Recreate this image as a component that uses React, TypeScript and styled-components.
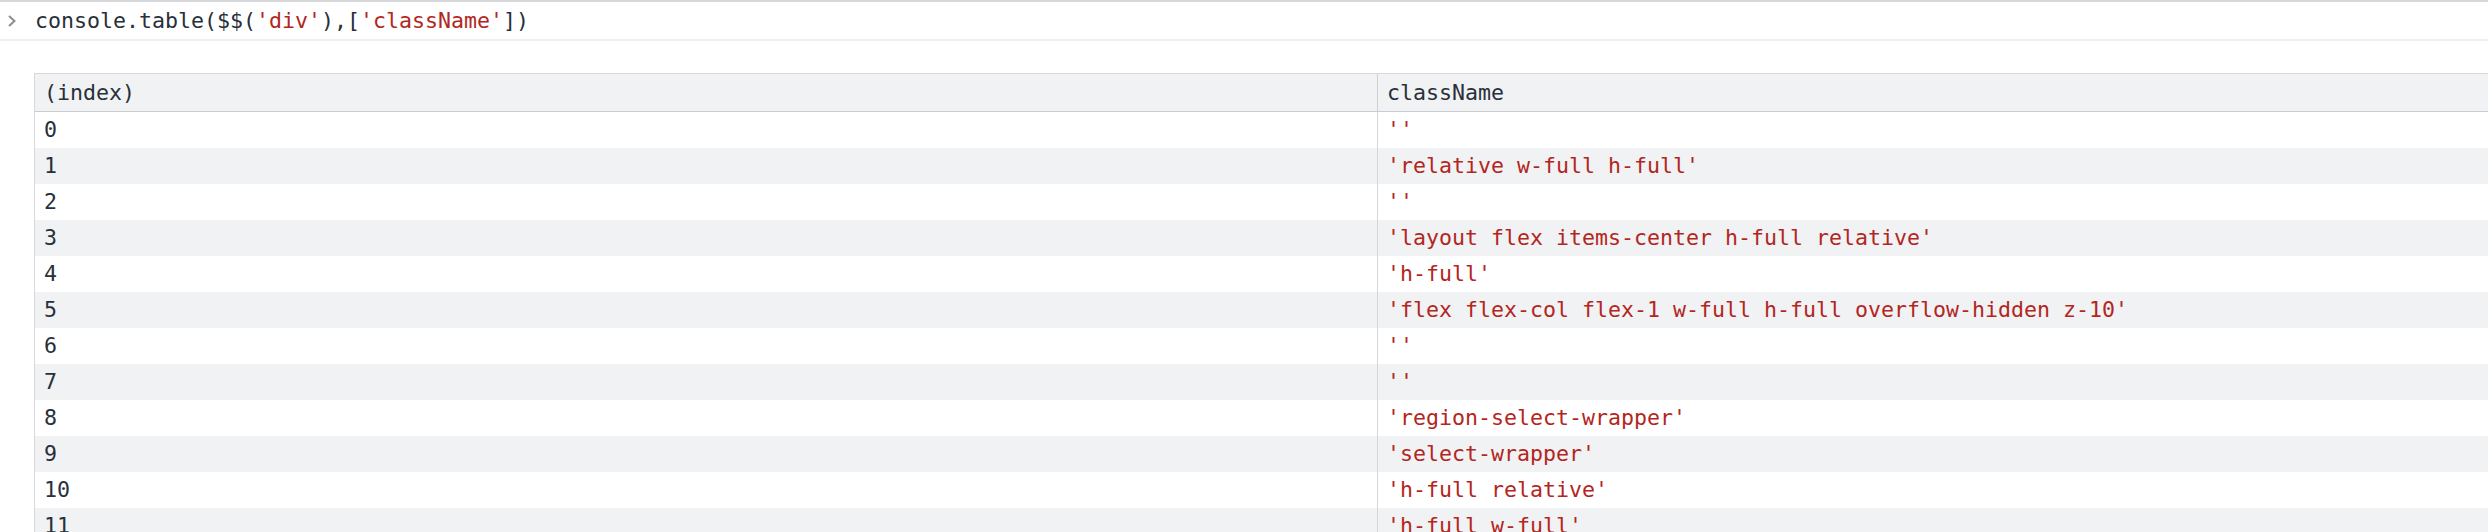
import React from "react";
import styled, { createGlobalStyle } from "styled-components";

const GlobalStyle = createGlobalStyle`
  html, body {
    margin: 0;
    padding: 0;
    background: #ffffff;
    overflow: hidden;
  }
`;

const Console = styled.div`
  width: 2488px;
  height: 532px;
  overflow: hidden;
  border-top: 2px solid #d5d7db;
  font-family: "DejaVu Sans Mono", "Liberation Mono", monospace;
  font-size: 21.6px;
  color: #28303a;
`;

const PromptRow = styled.div`
  display: flex;
  align-items: center;
  height: 37px;
  border-bottom: 2px solid #efefef;
`;

const Chevron = styled.div`
  display: flex;
  align-items: center;
  width: 35px;
  height: 100%;
  padding-left: 7px;
  box-sizing: border-box;
`;

const Code = styled.span`
  white-space: pre;
  line-height: 36px;
`;

const Str = styled.span`
  color: #b3261e;
`;

const Table = styled.div`
  margin: 32px 0 0 34px;
  width: 2688px;
  border-top: 1px solid #d8d9dc;
  border-left: 1px solid #d8d9dc;
`;

const Row = styled.div<{ $striped?: boolean; $head?: boolean }>`
  display: grid;
  grid-template-columns: 1342px 1344px;
  height: ${({ $head }) => ($head ? "37px" : "36px")};
  background: ${({ $striped, $head }) => ($striped || $head ? "#f1f2f4" : "#ffffff")};
  border-bottom: ${({ $head }) => ($head ? "1px solid #c9ccd0" : "none")};
`;

const Cell = styled.div<{ $divider?: boolean; $str?: boolean; $head?: boolean }>`
  padding-left: 9px;
  line-height: ${({ $head }) => ($head ? "37px" : "36px")};
  white-space: pre;
  overflow: hidden;
  color: ${({ $str }) => ($str ? "#b3261e" : "#28303a")};
  border-left: ${({ $divider, $head }) =>
    $divider ? `1px solid ${$head ? "#cdcfd2" : "#d6d7da"}` : "none"};
`;

const rows: string[] = [
  "",
  "relative w-full h-full",
  "",
  "layout flex items-center h-full relative",
  "h-full",
  "flex flex-col flex-1 w-full h-full overflow-hidden z-10",
  "",
  "",
  "region-select-wrapper",
  "select-wrapper",
  "h-full relative",
  "h-full w-full",
];

const ChevronIcon = () => (
  <svg width="10" height="14" viewBox="0 0 10 14">
    <path d="M2 2 L7.5 7 L2 12" fill="none" stroke="#8b8e93" strokeWidth="2" />
  </svg>
);

const App: React.FC = () => {
  return (
    <>
      <GlobalStyle />
      <Console>
        <PromptRow>
          <Chevron>
            <ChevronIcon />
          </Chevron>
          <Code>
            console.table($$(<Str>'div'</Str>),[<Str>'className'</Str>])
          </Code>
        </PromptRow>
        <Table>
          <Row $head>
            <Cell $head>(index)</Cell>
            <Cell $head $divider>className</Cell>
          </Row>
          {rows.map((cls, i) => (
            <Row key={i} $striped={i % 2 === 1}>
              <Cell>{i}</Cell>
              <Cell $divider $str>{`'${cls}'`}</Cell>
            </Row>
          ))}
        </Table>
      </Console>
    </>
  );
};

export default App;
